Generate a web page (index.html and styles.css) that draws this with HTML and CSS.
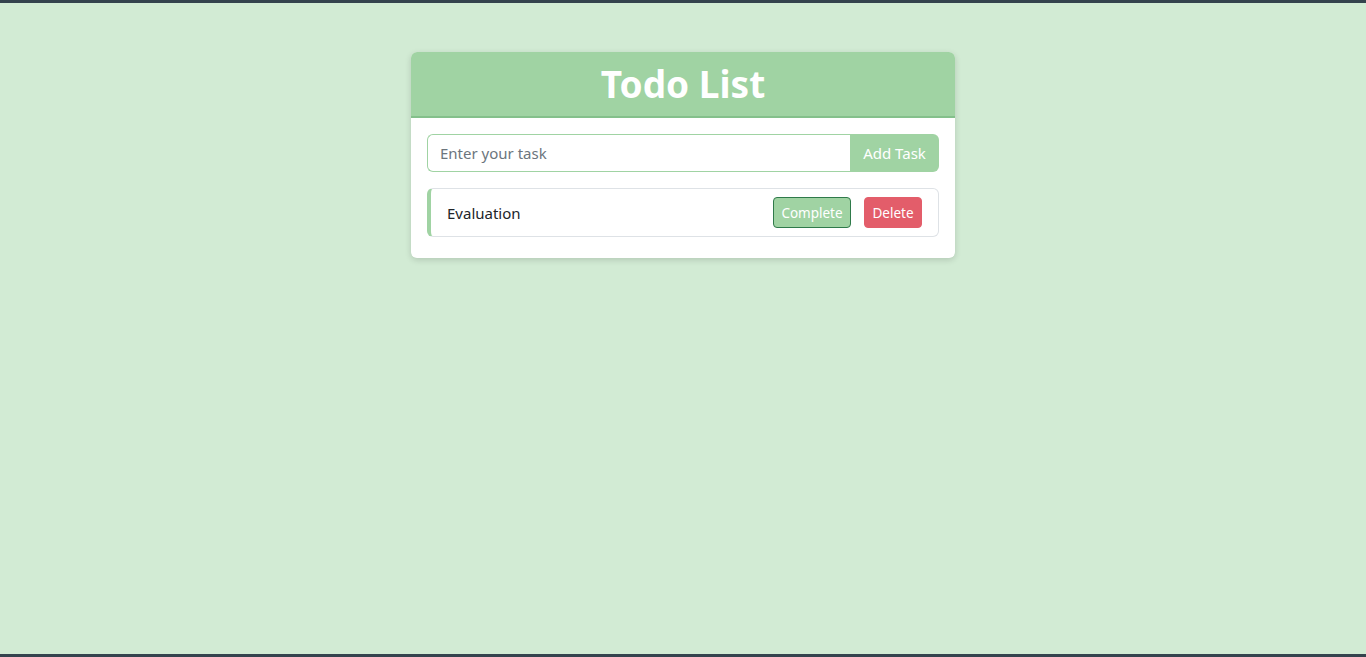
FILE: index.html
```html
<!DOCTYPE html>
<html lang="en">
<head>
<meta charset="utf-8">
<title>Todo List</title>
<link rel="stylesheet" href="styles.css">
</head>
<body>
<div class="page">
  <div class="edge"></div>
  <main class="main">
    <section class="card">
      <header class="card-header"><h1 class="title">Todo List</h1></header>
      <div class="card-body">
        <form class="input-group">
          <input class="task-input" type="text" placeholder="Enter your task">
          <button class="add-btn" type="button">Add Task</button>
        </form>
        <ul class="task-list">
          <li class="task">
            <span class="task-text">Evaluation</span>
            <div class="task-actions">
              <button class="btn btn-complete" type="button">Complete</button>
              <button class="btn btn-delete" type="button">Delete</button>
            </div>
          </li>
        </ul>
      </div>
    </section>
  </main>
  <div class="edge"></div>
</div>
</body>
</html>
```
FILE: styles.css
```css
* { box-sizing: border-box; }
html, body { margin: 0; padding: 0; }
body {
  font-family: "Noto Sans", "Open Sans", "Liberation Sans", sans-serif;
  color: #212529;
  background: #d2ebd4;
}
.page {
  height: 100vh;
  display: flex;
  flex-direction: column;
}
.edge {
  height: 3px;
  background: #34434d;
  flex: none;
}
.main {
  flex: 1;
  display: flex;
  justify-content: center;
  align-items: flex-start;
  padding-top: 49px;
}
.card {
  width: 544px;
  background: #fff;
  border-radius: 6px;
  box-shadow: 0 2px 6px rgba(0,0,0,0.15);
  overflow: hidden;
}
.card-header {
  height: 66px;
  background: #a0d3a3;
  border-bottom: 2px solid #84c08b;
  display: flex;
  align-items: center;
  justify-content: center;
}
.title {
  margin: 0;
  color: #fff;
  font-size: 37px;
  font-weight: 700;
  line-height: 1;
  padding-bottom: 2px;
}
.card-body {
  padding: 16px 16px 21px;
}
.input-group {
  display: flex;
  margin: 0;
  height: 38px;
}
.task-input {
  flex: 1;
  min-width: 0;
  border: 1px solid #a0d3a3;
  border-right: none;
  border-radius: 6px 0 0 6px;
  padding: 0 12px;
  font: inherit;
  font-size: 15px;
  color: #212529;
  outline: none;
}
.task-input::placeholder { color: #6c757d; }
.add-btn {
  width: 89px;
  border: none;
  background: #a0d3a3;
  color: #fff;
  border-radius: 0 6px 6px 0;
  font: inherit;
  font-size: 15px;
  padding: 0;
}
.task-list {
  list-style: none;
  margin: 16px 0 0;
  padding: 0;
}
.task {
  height: 49px;
  display: flex;
  align-items: center;
  justify-content: space-between;
  border: 1px solid #dee2e6;
  border-left: 4px solid #a0d3a3;
  border-radius: 6px;
  padding: 0 16px 0 16px;
}
.task-text { font-size: 15px; color: #212529; }
.task-actions { display: flex; gap: 13px; }
.btn {
  height: 31px;
  border-radius: 4px;
  font: inherit;
  font-size: 13.5px;
  color: #fff;
  padding: 0;
}
.btn-complete {
  width: 78px;
  background: #a0d3a3;
  border: 1px solid #2f7a4a;
}
.btn-delete {
  width: 58px;
  background: #e35d6a;
  border: 1px solid #e35d6a;
}
```
